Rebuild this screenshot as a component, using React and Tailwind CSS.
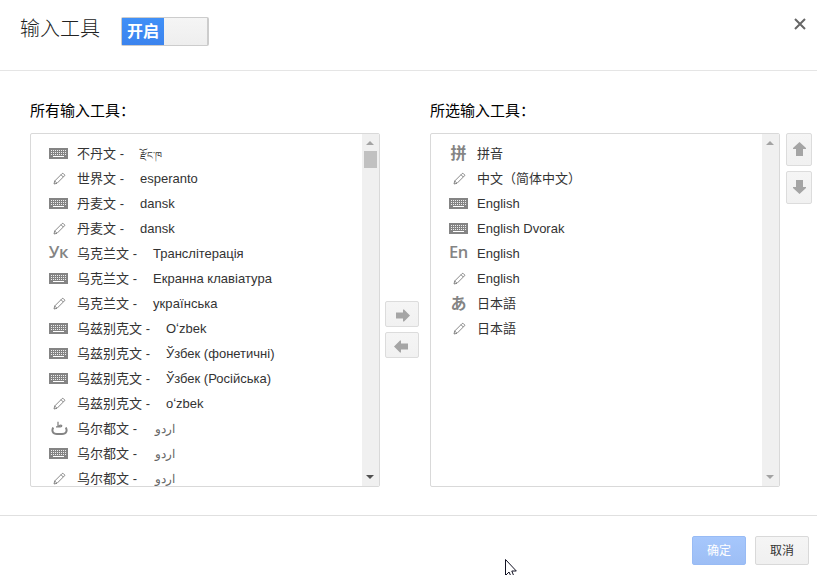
import React from "react";

const sans = "font-['Liberation_Sans','Noto_Sans_CJK_SC',sans-serif]";

function Keyboard() {
  const dots = [];
  for (let r = 0; r < 3; r++) {
    for (let c = 0; c < 8; c++) {
      dots.push(<rect key={r + "-" + c} x={2 + c * 2} y={2 + r * 2} width="1" height="1" fill="#eee" />);
    }
  }
  return (
    <svg width="19" height="11" viewBox="0 0 19 11" shapeRendering="crispEdges">
      <rect width="19" height="11" fill="#848484" />
      {dots}
      <rect x="4" y="8" width="11" height="1" fill="#fff" />
    </svg>
  );
}

function Pencil() {
  return (
    <svg width="13" height="13" viewBox="0 0 13 13" fill="none" stroke="#6c6c6c" strokeWidth="0.8" className="ml-[2px]">
      <path d="M1 12 L1.7 9 L9.2 1.5 L9.9 1.2 L11.8 3.1 L11.5 3.8 L4 11.3 Z" />
      <path d="M8 2.7 L10.3 5 M1.7 9 L4 11.3" />
    </svg>
  );
}

function Icon({ kind }) {
  if (kind === "kb") return <Keyboard />;
  if (kind === "pen") return <Pencil />;
  if (kind === "ٹ")
    return (
      <svg width="17" height="15" viewBox="0 0 17 15" fill="none" stroke="#848484" className="ml-px">
        <path d="M2.2 6.5C0.6 9.5 1.4 13 6 13H11C15.5 13 16.5 9.5 14.8 6.5" strokeWidth="2" />
        <path d="M7 0.8V5.8M5 5.8H9.2C12 5.6 10.6 2.8 7.6 5.4" strokeWidth="1.3" />
      </svg>
    );
  if (kind === "Ук" || kind === "En")
    return <span className="relative -top-px font-['Open_Sans',sans-serif] text-[16.5px] leading-none font-semibold tracking-[-0.3px] text-[#848484]">{kind}</span>;
  return <span className="relative -top-[2px] font-['Noto_Sans_CJK_SC',sans-serif] text-[16px] leading-none font-bold text-[#848484]">{kind}</span>;
}

function Row({ item }) {
  const [kind, name, native, style] = item;
  return (
    <li className="flex h-[25px] items-center whitespace-nowrap text-[13px] text-[#333]">
      <span className="ml-[17px] flex w-[21px] shrink-0 justify-center">
        <Icon kind={kind} />
      </span>
      <span className="ml-2">{name}{native ? " -" : ""}</span>
      {native && <span className={style || "ml-4"}>{native}</span>}
    </li>
  );
}

function Triangle({ down, color }) {
  return (
    <svg width="8" height="4" viewBox="0 0 8 4" className="mr-px shrink-0">
      <path d={down ? "M0 0H8L4 4Z" : "M0 4H8L4 0Z"} fill={color} />
    </svg>
  );
}

function ListBox({ items, thumb }) {
  return (
    <div className="flex h-[354px] w-[350px] overflow-hidden rounded-[2px] border border-[#d9d9d9]">
      <ul className="h-full flex-1 overflow-hidden pt-[7px]">
        {items.map((item, i) => <Row key={i} item={item} />)}
      </ul>
      <div className="flex h-full w-[17px] flex-col items-center bg-[#f0f0f0] pt-[7px] pb-[7px]">
        <Triangle color="#a3a3a3" />
        {thumb && <div className="mt-[6px] h-[17px] w-[13px] bg-[#c1c1c1]" />}
        <div className="mt-auto flex"><Triangle down color={thumb ? "#505050" : "#a3a3a3"} /></div>
      </div>
    </div>
  );
}

function ArrowButton({ size, path, w, h, shift }) {
  return (
    <button className={"flex items-center justify-center rounded-[2px] border border-[#dcdcdc] bg-linear-to-b from-[#f5f5f5] to-[#f1f1f1] " + size}>
      <svg width={w} height={h} viewBox={`0 0 ${w} ${h}`} className={shift}>
        <path d={path} fill="#a5a5a5" />
      </svg>
    </button>
  );
}

const urdu = "ml-[18px] text-[12px] text-[#666]";

const allTools = [
  ["kb", "不丹文", "རྫོང་ཁ", "relative top-[2px] ml-4 text-[10px]"],
  ["pen", "世界文", "esperanto"],
  ["kb", "丹麦文", "dansk"],
  ["pen", "丹麦文", "dansk"],
  ["Ук", "乌克兰文", "Транслітерація"],
  ["kb", "乌克兰文", "Екранна клавіатура", "ml-4 tracking-[0.04px]"],
  ["pen", "乌克兰文", "українська", "ml-4 tracking-[0.08px]"],
  ["kb", "乌兹别克文", "Oʻzbek"],
  ["kb", "乌兹别克文", "Ўзбек (фонетичні)"],
  ["kb", "乌兹别克文", "Ўзбек (Російська)"],
  ["pen", "乌兹别克文", "oʻzbek"],
  ["ٹ", "乌尔都文", "اردو", urdu],
  ["kb", "乌尔都文", "اردو", urdu],
  ["pen", "乌尔都文", "اردو", urdu],
];

const selectedTools = [
  ["拼", "拼音"],
  ["pen", "中文（简体中文）"],
  ["kb", "English"],
  ["kb", "English Dvorak"],
  ["En", "English"],
  ["pen", "English"],
  ["あ", "日本語"],
  ["pen", "日本語"],
];

export default function App() {
  return (
    <div className={"relative flex h-[575px] w-[817px] flex-col overflow-hidden bg-white " + sans}>
      <header className="flex h-[71px] shrink-0 border-b border-[#e5e5e5] pl-5">
        <h1 className="mt-[14px] w-[101px] text-[20px] leading-[30px] font-light text-[#222]">输入工具</h1>
        <div className="mt-[17px] flex h-[29px] w-[88px] rounded-[2px] border border-r-2 border-[#ccc] bg-linear-to-b from-[#f5f5f5] to-[#eee]">
          <div className="flex w-[42px] items-center justify-center bg-linear-to-b from-[#4090f7] to-[#3b83ee] text-[16px] font-bold text-white">
            开启
          </div>
        </div>
        <button className="mt-[18px] mr-[11px] ml-auto h-3 w-3">
          <svg width="12" height="12" viewBox="0 0 12 12" stroke="#666" strokeWidth="2">
            <path d="M1 1L11 11M11 1L1 11" />
          </svg>
        </button>
      </header>

      <main className="flex h-[444px] shrink-0 pl-[30px]">
        <section>
          <h2 className="h-[62px] pt-[29px] text-[15px] leading-[22px] text-black">所有输入工具：</h2>
          <ListBox items={allTools} thumb />
        </section>
        <div className="mt-[230px] ml-[5px] flex w-[45px] flex-col gap-[5px]">
          <ArrowButton size="h-[26px] w-[34px]" w={14} h={13} shift="ml-[2px] mt-[2px]" path="M0 3.5H7V0.5H8L14 6.5L8 12.5H7V9.5H0Z" />
          <ArrowButton size="h-[26px] w-[34px]" w={14} h={13} shift="mt-[2px] mr-[2px]" path="M14 3.5H7V0.5H6L0 6.5L6 12.5H7V9.5H14Z" />
        </div>
        <section>
          <h2 className="h-[62px] pt-[29px] text-[15px] leading-[22px] text-black">所选输入工具：</h2>
          <ListBox items={selectedTools} />
        </section>
        <div className="mt-[62px] ml-[6px] flex flex-col gap-[5px]">
          <ArrowButton size="h-[33px] w-[26px]" w={13} h={14} shift="mb-[2px]" path="M3 14V7H0V6L6.5 0L13 6V7H10V14Z" />
          <ArrowButton size="h-[33px] w-[26px]" w={13} h={14} shift="mb-[2px]" path="M3 0V7H0V8L6.5 14L13 8V7H10V0Z" />
        </div>
      </main>

      <footer className="flex flex-1 justify-end gap-[9px] border-t border-[#e0e0e0] pt-5 pr-2 text-[12px]">
        <button className="h-[29px] w-[54px] rounded-[2px] border border-[#98bbf5] bg-linear-to-b from-[#a6c7fc] to-[#9dbef5] text-white">确定</button>
        <button className="h-[29px] w-[54px] rounded-[2px] border border-[#d9d9d9] bg-linear-to-b from-[#f5f5f5] to-[#f0f0f0] text-[#333]">取消</button>
      </footer>

      <svg className="absolute top-[559px] left-[505px]" width="12" height="16" viewBox="0 0 12 16">
        <path d="M0.5 0.5V16.5L4 13L6.5 18.5L9 17.5L6.8 12H11.3Z" fill="#fff" stroke="#112" strokeWidth="1" />
      </svg>
    </div>
  );
}
